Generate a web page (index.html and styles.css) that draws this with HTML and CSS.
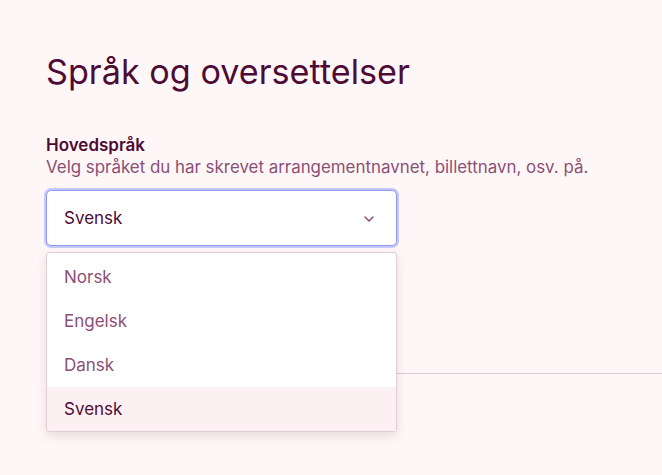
FILE: index.html
```html
<!DOCTYPE html>
<html lang="no">
<head>
<meta charset="utf-8">
<link rel="stylesheet" href="styles.css">
</head>
<body>
<main class="page">
  <h1 class="title">Språk og oversettelser</h1>
  <section class="field">
    <div class="label">Hovedspråk</div>
    <div class="desc">Velg språket du har skrevet arrangementnavnet, billettnavn, osv. på.</div>
    <div class="select-wrap">
      <div class="select">
        <span>Svensk</span>
        <svg class="chev" width="10" height="6" viewBox="0 0 10 6"><path d="M1 1l4 4 4-4" fill="none" stroke="#8b4f76" stroke-width="1.5" stroke-linecap="round" stroke-linejoin="round"/></svg>
      </div>
      <ul class="menu">
        <li class="opt">Norsk</li>
        <li class="opt">Engelsk</li>
        <li class="opt">Dansk</li>
        <li class="opt active">Svensk</li>
      </ul>
    </div>
  </section>
  <hr class="divider">
</main>
</body>
</html>
```
FILE: styles.css
```css
html, body { margin: 0; padding: 0; }
body {
  background: #fff7f7;
  font-family: Inter, "Noto Sans", sans-serif;
  color: #4d0b35;
  height: 475px;
  overflow: hidden;
}
.page { padding: 0 0 0 46px; }
.title {
  margin: 0;
  padding-top: 52px;
  font-size: 34.2px;
  line-height: 40px;
  font-weight: 400;
  letter-spacing: 0;
}
.field { margin-top: 42px; }
.label {
  font-size: 17px;
  line-height: 22px;
  font-weight: 600;
}
.desc {
  font-size: 16.9px;
  line-height: 22px;
  color: #8b4f76;
}
.select-wrap { position: relative; width: 351px; margin-top: 12px; }
.select {
  box-sizing: border-box;
  height: 56px;
  border: 1px solid #8f95f0;
  box-shadow: 0 0 0 2px #c6c9fb;
  border-radius: 5px;
  background: #fff;
  display: flex;
  align-items: center;
  justify-content: space-between;
  padding: 0 22px 0 17px;
  font-size: 17px;
}
.chev { margin-top: 2px; }
.menu {
  position: absolute;
  left: 0; right: 0;
  top: 62px;
  margin: 0; padding: 0;
  list-style: none;
  background: #fff;
  border: 1px solid #e0cdd8;
  border-radius: 3px;
  box-shadow: 0 4px 12px rgba(77, 11, 53, 0.12);
  overflow: hidden;
  z-index: 2;
}
.opt {
  height: 44px;
  display: flex;
  align-items: center;
  padding-left: 17px;
  font-size: 17px;
  color: #8b4f76;
}
.opt:first-child { height: 46px; padding-top: 1px; box-sizing: border-box; }
.opt.active { background: #fcf0f2; color: #4d0b35; }
.divider {
  margin: 127px 0 0 0;
  border: 0;
  border-top: 1px solid #dcc8d6;
}
```
